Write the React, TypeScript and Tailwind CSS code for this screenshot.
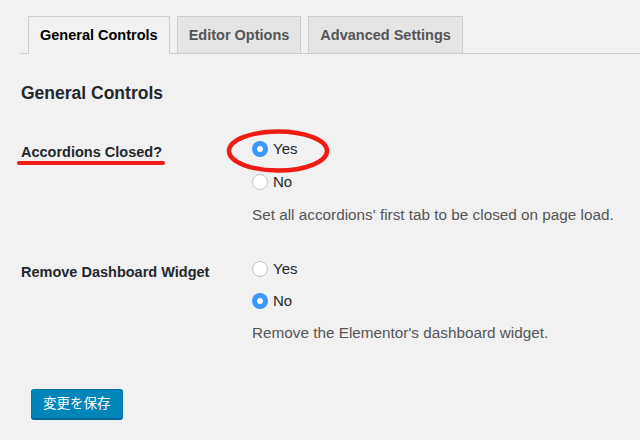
import React from "react";

function Radio({ checked, label }: { checked?: boolean; label: string }) {
  return (
    <label className="flex items-center h-[16px] gap-[5px] text-[15px] text-[#23282d]">
      {checked ? (
        <span className="w-[16px] h-[16px] rounded-full bg-[#3b99fc] flex items-center justify-center">
          <span className="w-[6px] h-[6px] rounded-full bg-white" />
        </span>
      ) : (
        <span className="w-[16px] h-[16px] rounded-full bg-white border border-[#c4c4c4]" />
      )}
      <span>{label}</span>
    </label>
  );
}

export default function App() {
  return (
    <div
      className="w-[640px] h-[440px] bg-[#f1f1f1] overflow-hidden relative"
      style={{ fontFamily: '"Liberation Sans", Arial, "Noto Sans CJK JP", sans-serif' }}
    >
      {/* tabs */}
      <div className="pt-[16px] pl-[20px]">
        <div className="flex items-end border-b border-[#cccccc] pl-[8px] gap-[7px] h-[38px]">
          <div className="h-[38px] px-[11px] pt-[2px] flex items-center border border-[#cccccc] border-b-[#f1f1f1] bg-[#f1f1f1] -mb-px text-[14.5px] font-bold text-[#000]">
            General Controls
          </div>
          <div className="h-[37px] px-[11px] pt-[2px] flex items-center border border-b-0 border-[#cccccc] bg-[#e5e5e5] text-[14.5px] font-bold text-[#555]">
            Editor Options
          </div>
          <div className="h-[37px] px-[11px] pt-[2px] flex items-center border border-b-0 border-[#cccccc] bg-[#e5e5e5] text-[14.5px] font-bold text-[#555]">
            Advanced Settings
          </div>
        </div>
      </div>

      <div className="px-[21px]">
        <h2 className="mt-[27px] text-[17.5px] font-bold text-[#23282d] leading-[24px]">General Controls</h2>

        {/* row 1 */}
        <div className="grid grid-cols-[231px_1fr] mt-[24px]">
          <div className="relative pt-[13px] text-[14.5px] font-bold text-[#23282d] leading-[20px]">
            Accordions Closed?
            <div className="absolute left-[-4px] top-[32px] w-[148px] h-[4px] bg-[#f01c14] rounded-sm" />
          </div>
          <div className="relative pt-[12px]">
            <Radio checked label="Yes" />
            <div className="mt-[17px]">
              <Radio label="No" />
            </div>
            <p className="mt-[15px] text-[15.3px] text-[#555] leading-[20px]">
              Set all accordions' first tab to be closed on page load.
            </p>
            <svg className="absolute left-[-26px] top-[-1px]" width="104" height="46" viewBox="0 0 104 46">
              <ellipse cx="52" cy="23" rx="49" ry="19.5" fill="none" stroke="#f01c14" strokeWidth="4.5" />
            </svg>
          </div>
        </div>

        {/* row 2 */}
        <div className="grid grid-cols-[231px_1fr] mt-[36px]">
          <div className="pt-[1px] text-[14.5px] font-bold text-[#23282d] leading-[20px]">Remove Dashboard Widget</div>
          <div>
            <Radio label="Yes" />
            <div className="mt-[16px]">
              <Radio checked label="No" />
            </div>
            <p className="mt-[14px] text-[15.3px] text-[#555] leading-[20px]">Remove the Elementor's dashboard widget.</p>
          </div>
        </div>

        <button className="mt-[46px] ml-[10px] h-[30px] px-[11px] rounded-[3px] bg-[#0085ba] border border-[#0073aa] border-b-[#006799] text-white text-[13.5px] shadow-[0_1px_0_#006799]">
          変更を保存
        </button>
      </div>
    </div>
  );
}
